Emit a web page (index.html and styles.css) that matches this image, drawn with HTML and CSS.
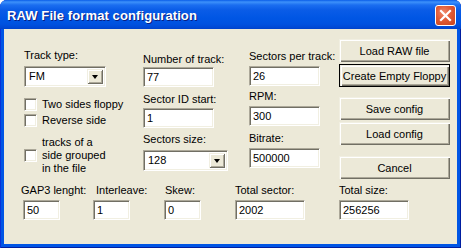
FILE: index.html
```html
<!DOCTYPE html>
<html lang="en">
<head>
    <meta charset="UTF-8">
    <title>RAW File format configuration</title>
    <link rel="stylesheet" href="styles.css">
</head>
<body>
    <div class="window">
        <div class="titlebar">
            <span class="title">RAW File format configuration</span>
            <div class="close">
                <svg width="13" height="13" viewBox="0 0 13 13">
                    <path d="M2 2 L11 11 M11 2 L2 11" stroke="#fff" stroke-width="2.2" stroke-linecap="square"/>
                </svg>
            </div>
        </div>

        <div class="client">
            <div class="main">
                <!-- track type + checkboxes -->
                <div class="col col-track">
                    <div class="label">Track type:</div>
                    <div class="combo combo-track">
                        <span class="combo-text">FM</span>
                        <span class="combo-arrow"><span class="tri"></span></span>
                    </div>
                    <div class="check check-first"><span class="box"></span><span>Two sides floppy</span></div>
                    <div class="check check-second"><span class="box"></span><span>Reverse side</span></div>
                    <div class="check check-multi"><span class="box"></span><span>tracks of a<br>side grouped<br>in the file</span></div>
                </div>

                <div class="col col-mid">
                    <div class="label">Number of track:</div>
                    <div class="edit w71 mb1">77</div>
                    <div class="label mt6">Sector ID start:</div>
                    <div class="edit w71 mb2">1</div>
                    <div class="label mt5">Sectors size:</div>
                    <div class="combo combo-size">
                        <span class="combo-text">128</span>
                        <span class="combo-arrow"><span class="tri"></span></span>
                    </div>
                </div>

                <div class="col col-right">
                    <div class="label">Sectors per track:</div>
                    <div class="edit w71 mt3">26</div>
                    <div class="label mt4">RPM:</div>
                    <div class="edit w71 mt3">300</div>
                    <div class="label mt6">Bitrate:</div>
                    <div class="edit w71 mt3">500000</div>
                </div>

                <div class="col col-buttons">
                    <div class="button">Load RAW file</div>
                    <div class="button default">Create Empty Floppy</div>
                    <div class="button gap-big">Save config</div>
                    <div class="button">Load config</div>
                    <div class="button gap-cancel">Cancel</div>
                </div>
            </div>

            <div class="bottom-row">
                <div class="group g-gap">
                    <div class="label">GAP3 lenght:</div>
                    <div class="edit w37 shift2">50</div>
                </div>
                <div class="group g-inter">
                    <div class="label shift3">Interleave:</div>
                    <div class="edit w37">1</div>
                </div>
                <div class="group g-skew">
                    <div class="label shift1">Skew:</div>
                    <div class="edit w37">0</div>
                </div>
                <div class="group g-total">
                    <div class="label">Total sector:</div>
                    <div class="edit w70">2002</div>
                </div>
                <div class="group">
                    <div class="label">Total size:</div>
                    <div class="edit w70">256256</div>
                </div>
            </div>
        </div>
    </div>
</body>
</html>
```

FILE: styles.css
```css
body {
    margin: 0;
    background: #ffffff;
    font-family: "Liberation Sans", Arial, sans-serif;
    font-size: 11px;
    color: #000;
}
.window {
    width: 461px;
    height: 248px;
    background: #0055e5;
    border-radius: 7px 7px 0 0;
    box-shadow: inset 1px 0 #0831d9, inset -1px 0 #001ea0, inset 0 -1px #001ea0;
    display: flex;
    flex-direction: column;
}
.titlebar {
    height: 29px;
    flex: none;
    display: flex;
    align-items: center;
    justify-content: space-between;
    padding: 0 5px 0 7px;
    border-radius: 7px 7px 0 0;
    background: linear-gradient(#0a5de8 0, #3d91fa 2px, #1b6ef0 5px, #0a5ce7 10px, #0056e4 18px, #0052e0 24px, #0047d3 28px, #0041c6 29px);
}
.title {
    color: #fff;
    font-weight: bold;
    font-size: 13px;
    letter-spacing: 0.1px;
    text-shadow: 1px 1px #0a1e80;
    margin-top: 1px;
}
.close {
    width: 19px;
    height: 19px;
    border: 1px solid #fff;
    border-radius: 3px;
    background: radial-gradient(circle at 40% 35%, #f08a6c 0, #e05a35 45%, #c8431c 100%);
    display: flex;
    align-items: center;
    justify-content: center;
    margin-top: 1px;
}
.client {
    flex: 1;
    margin: 0 4px 4px 4px;
    background: #ece9d8;
}
.main {
    display: flex;
}
.col {
    display: flex;
    flex-direction: column;
    align-items: flex-start;
}
.col-track {
    margin-left: 20px;
    width: 119px;
    padding-top: 20px;
}
.col-mid {
    width: 106px;
    padding-top: 24px;
}
.col-right {
    width: 90px;
    padding-top: 21px;
}
.col-buttons {
    padding-top: 10px;
}
.label {
    line-height: 13px;
    height: 13px;
    white-space: nowrap;
}
.mt3 { margin-top: 3px; }
.mt4 { margin-top: 4px; }
.mt5 { margin-top: 5px; }
.mt6 { margin-top: 6px; }
.mb1 { margin-top: 1px; }
.mb2 { margin-top: 2px; }
.shift1 { margin-left: 1px; }
.shift2 { margin-left: 2px; }
.shift3 { margin-left: 3px; }

/* sunken edit box */
.edit {
    box-sizing: border-box;
    height: 20px;
    background: #fff;
    border: 1px solid;
    border-color: #aca899 #fff #fff #aca899;
    box-shadow: inset 1px 1px #716f64, inset -1px -1px #f1efe2;
    padding: 3px 0 0 3px;
    line-height: 13px;
}
.w71 { width: 71px; }
.w70 { width: 70px; }
.w37 { width: 37px; }

/* combo box */
.combo {
    box-sizing: border-box;
    height: 21px;
    background: #fff;
    border: 1px solid;
    border-color: #aca899 #fff #fff #aca899;
    box-shadow: inset 1px 1px #716f64, inset -1px -1px #f1efe2;
    display: flex;
    align-items: stretch;
    padding: 2px;
    margin-top: 4px;
}
.combo-track {
    width: 82px;
}
.combo-size {
    width: 85px;
}
.combo-text {
    flex: 1;
    line-height: 15px;
    padding-left: 2px;
}
.combo-arrow {
    width: 16px;
    background: #ece9d8;
    box-shadow: inset 1px 1px #f1efe2, inset -1px -1px #716f64, inset 2px 2px #fff, inset -2px -2px #aca899;
    display: flex;
    align-items: center;
    justify-content: center;
}
.tri {
    width: 0;
    height: 0;
    border-left: 3.5px solid transparent;
    border-right: 3.5px solid transparent;
    border-top: 4px solid #000;
    margin-top: 1px;
}

/* checkboxes */
.check {
    display: flex;
    align-items: center;
    line-height: 13px;
}
.check .box {
    box-sizing: border-box;
    width: 13px;
    height: 13px;
    flex: none;
    background: #fff;
    border: 1px solid;
    border-color: #aca899 #fff #fff #aca899;
    box-shadow: inset 1px 1px #716f64, inset -1px -1px #f1efe2;
    margin-right: 5px;
}
.check-first { margin-top: 11px; }
.check-second { margin-top: 3px; }
.check-multi { margin-top: 9px; }

/* push buttons */
.button {
    box-sizing: border-box;
    width: 111px;
    height: 23px;
    background: #ece9d8;
    box-shadow: inset 1px 1px #f1efe2, inset 2px 2px #fff, inset -1px -1px #716f64, inset -2px -2px #aca899;
    display: flex;
    align-items: center;
    justify-content: center;
    white-space: nowrap;
}
.button + .button {
    margin-top: 2px;
}
.button.default {
    border: 1px solid #000;
}
.button.gap-big {
    margin-top: 10px;
}
.button.gap-cancel {
    margin-top: 11px;
}

/* bottom row */
.bottom-row {
    display: flex;
    margin-top: 5px;
    margin-left: 17px;
}
.group {
    display: flex;
    flex-direction: column;
    align-items: flex-start;
}
.group .edit {
    margin-top: 3px;
}
.g-gap { width: 72px; }
.g-inter { width: 71px; }
.g-skew { width: 71px; }
.g-total { width: 104px; }
```
